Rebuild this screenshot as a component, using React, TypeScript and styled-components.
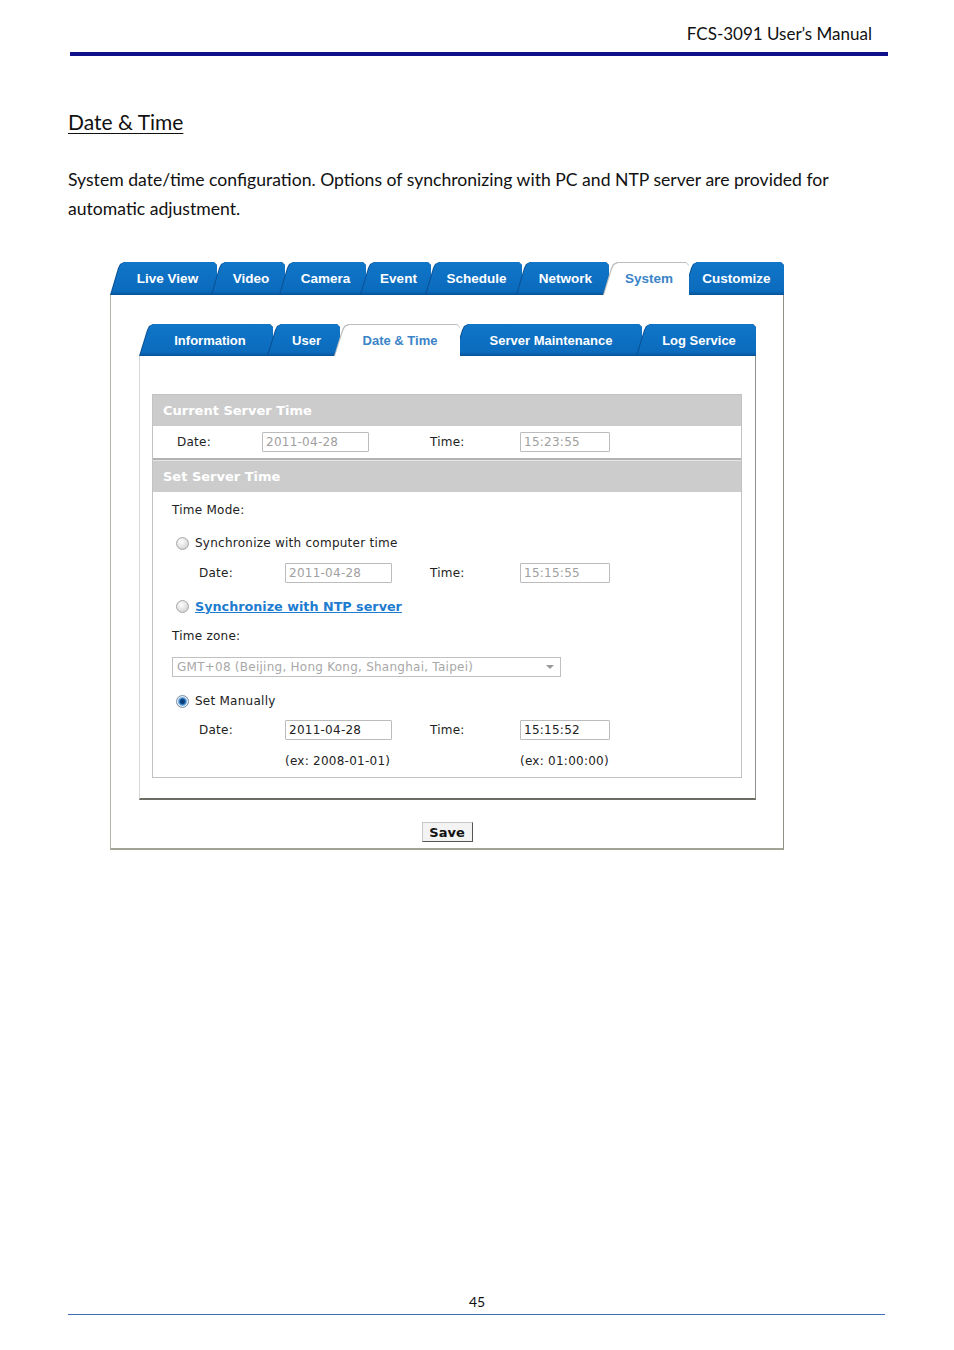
import styled, { createGlobalStyle } from "styled-components";

const GlobalStyle = createGlobalStyle`
  html, body {
    margin: 0;
    padding: 0;
    background: #fff;
  }
  body {
    font-family: Lato, "Noto Sans", sans-serif;
    color: #000;
  }
`;

const TOP_TABS = [
  { label: "Live View", width: 107 },
  { label: "Video", width: 68 },
  { label: "Camera", width: 81 },
  { label: "Event", width: 65 },
  { label: "Schedule", width: 91 },
  { label: "Network", width: 87 },
  { label: "System", width: 80, active: true },
  { label: "Customize", width: 95 },
];

const SUB_TABS = [
  { label: "Information", width: 134 },
  { label: "User", width: 67 },
  { label: "Date & Time", width: 120, active: true },
  { label: "Server Maintenance", width: 182 },
  { label: "Log Service", width: 114 },
];

const TAB_SHAPE =
  "polygon(0 100%, 8px 6px, 10px 2px, 14px 0, calc(100% - 3px) 0, 100% 3px, 100% 100%)";

export default function App() {
  return (
    <Page>
      <GlobalStyle />
      <DocHeader>FCS-3091 User’s Manual</DocHeader>
      <HeaderRule />

      <Heading>Date &amp; Time</Heading>
      <Paragraph>
        System date/time configuration. Options of synchronizing with PC and NTP server are provided for
        automatic adjustment.
      </Paragraph>

      <Shot>
        <TabBar $h={33}>
          {TOP_TABS.map((t, i) => (
            <Tab key={t.label} $w={t.width} $first={i === 0} $active={t.active} $size={13.5}>
              {t.label}
            </Tab>
          ))}
        </TabBar>
        <OuterPanel>
          <TabBar $h={32}>
            {SUB_TABS.map((t, i) => (
              <Tab key={t.label} $w={t.width} $first={i === 0} $active={t.active} $size={13}>
                {t.label}
              </Tab>
            ))}
          </TabBar>
          <InnerPanel>
            <FormBox>
              <SectionHeader>Current Server Time</SectionHeader>
              <FieldRow $label={25} $input={110} $h={32} $divider>
                <Label>Date:</Label>
                <TextBox $w={107} readOnly disabled defaultValue="2011-04-28" />
                <Label>Time:</Label>
                <TextBox $w={90} readOnly disabled defaultValue="15:23:55" />
              </FieldRow>
              <SectionHeader>Set Server Time</SectionHeader>

              <PlainRow $h={35} $pad={19}>
                <Label>Time Mode:</Label>
              </PlainRow>
              <PlainRow $h={32} $pad={23}>
                <Radio />
                <Label>Synchronize with computer time</Label>
              </PlainRow>
              <FieldRow $label={47} $input={133} $h={28}>
                <Label>Date:</Label>
                <TextBox $w={107} readOnly disabled defaultValue="2011-04-28" />
                <Label>Time:</Label>
                <TextBox $w={90} readOnly disabled defaultValue="15:15:55" />
              </FieldRow>
              <PlainRow $h={38} $pad={23}>
                <Radio />
                <NtpLink href="#">Synchronize with NTP server</NtpLink>
              </PlainRow>
              <PlainRow $h={22} $pad={19}>
                <Label>Time zone:</Label>
              </PlainRow>
              <PlainRow $h={40} $pad={19}>
                <SelectBox>
                  GMT+08 (Beijing, Hong Kong, Shanghai, Taipei)
                  <SelectArrow />
                </SelectBox>
              </PlainRow>
              <PlainRow $h={28} $pad={23}>
                <Radio $checked />
                <Label>Set Manually</Label>
              </PlainRow>
              <FieldRow $label={47} $input={133} $h={30}>
                <Label>Date:</Label>
                <TextBox $w={107} readOnly defaultValue="2011-04-28" />
                <Label>Time:</Label>
                <TextBox $w={90} readOnly defaultValue="15:15:52" />
              </FieldRow>
              <FieldRow $label={47} $input={133} $h={32}>
                <span />
                <Label>(ex: 2008-01-01)</Label>
                <span />
                <Label>(ex: 01:00:00)</Label>
              </FieldRow>
            </FormBox>
          </InnerPanel>
          <SaveArea>
            <SaveButton type="button">Save</SaveButton>
          </SaveArea>
        </OuterPanel>
      </Shot>

      <Footer>
        <PageNumber>45</PageNumber>
        <FooterRule />
      </Footer>
    </Page>
  );
}

const Page = styled.div`
  width: 954px;
  height: 1350px;
  display: flex;
  flex-direction: column;
  overflow: hidden;
`;

const DocHeader = styled.div`
  padding: 24px 82px 0 0;
  text-align: right;
  font-size: 17px;
  line-height: 20px;
  color: #111;
`;

const HeaderRule = styled.div`
  height: 4px;
  margin: 8px 66px 0 70px;
  background: #10108c;
`;

const Heading = styled.h2`
  margin: 53px 0 0 68px;
  font-size: 21px;
  font-weight: normal;
  line-height: 26px;
  text-decoration: underline;
  text-underline-offset: 3px;
  text-decoration-thickness: 1px;
  color: #111;
`;

const Paragraph = styled.p`
  margin: 30px 0 0 68px;
  width: 790px;
  font-size: 17.6px;
  line-height: 29px;
  color: #111;
`;

const Shot = styled.div`
  width: 674px;
  margin: 39px 0 0 110px;
`;

const TabBar = styled.div<{ $h: number }>`
  display: flex;
  height: ${(p) => p.$h}px;
`;

const Tab = styled.div<{ $w: number; $first?: boolean; $active?: boolean; $size: number }>`
  position: relative;
  flex: none;
  box-sizing: border-box;
  width: ${(p) => p.$w + (p.$first ? 0 : 6)}px;
  margin-left: ${(p) => (p.$first ? 0 : -6)}px;
  padding-left: ${(p) => (p.$first ? 8 : 6)}px;
  z-index: ${(p) => (p.$active ? 5 : 1)};
  display: flex;
  align-items: center;
  justify-content: center;
  font-family: "Liberation Sans", Arial, sans-serif;
  font-weight: bold;
  font-size: ${(p) => p.$size}px;
  color: ${(p) => (p.$active ? "#3a84c8" : "#fff")};
  background: ${(p) => (p.$active ? "#bdbdbd" : "#0a4f92")};
  clip-path: ${TAB_SHAPE};

  &::before {
    content: "";
    position: absolute;
    top: ${(p) => (p.$active ? 1 : 0)}px;
    left: 1px;
    right: 0;
    bottom: 0;
    z-index: -1;
    clip-path: ${TAB_SHAPE};
    background: ${(p) =>
      p.$active
        ? "#fff"
        : "linear-gradient(to bottom, #1076c8 0%, #0b6bbd 88%, #085396 100%)"};
  }
`;

const OuterPanel = styled.div`
  box-sizing: border-box;
  height: 555px;
  border: 1px solid #b4b4a8;
  border-top: none;
  border-right-color: #8f8f82;
  border-bottom: 2px solid #a3a396;
  padding: 29px 0 0 28px;
  display: flex;
  flex-direction: column;
  width: 674px;

  & > ${TabBar} {
    width: 617px;
  }
`;

const InnerPanel = styled.div`
  box-sizing: border-box;
  width: 617px;
  height: 444px;
  border: 1px solid #d6d6d6;
  border-top: none;
  border-right-color: #909090;
  border-bottom: 2px solid #6c6c64;
  padding: 38px 0 0 12px;
`;

const FormBox = styled.div`
  box-sizing: border-box;
  width: 590px;
  border: 1px solid #c2c2c2;
  font-family: "DejaVu Sans", Verdana, sans-serif;
  font-size: 12px;
  letter-spacing: 0.25px;
  color: #222;
`;

const SectionHeader = styled.div`
  height: 31px;
  display: flex;
  align-items: center;
  padding-left: 10px;
  background: #cccccc;
  color: #fff;
  font-weight: bold;
  font-size: 13px;
  letter-spacing: 0;
`;

const FieldRow = styled.div<{ $label: number; $input: number; $h: number; $divider?: boolean }>`
  display: grid;
  grid-template-columns: ${(p) => `${p.$input - p.$label}px ${278 - p.$input}px 90px 1fr`};
  align-items: center;
  height: ${(p) => p.$h}px;
  padding-left: ${(p) => p.$label - 1}px;
  ${(p) =>
    p.$divider &&
    `
    border-bottom: 2px solid #b2b2b2;
    box-shadow: 0 1px 0 #e6e6e6;
    margin-bottom: 1px;
  `}
`;

const PlainRow = styled.div<{ $h: number; $pad: number }>`
  display: flex;
  align-items: center;
  gap: 6px;
  height: ${(p) => p.$h}px;
  padding-left: ${(p) => p.$pad}px;
`;

const Label = styled.span`
  white-space: nowrap;
  color: #222;
`;

const TextBox = styled.input<{ $w: number }>`
  box-sizing: border-box;
  width: ${(p) => p.$w}px;
  height: 20px;
  padding: 0 3px;
  margin: 0;
  border: 1px solid #bcbcbc;
  border-radius: 1px;
  background: #fff;
  font-family: "DejaVu Sans", Verdana, sans-serif;
  font-size: 12px;
  letter-spacing: 0.25px;
  color: ${(p) => (p.disabled ? "#a0a0a0" : "#222")};
  outline: none;
`;

const Radio = styled.span<{ $checked?: boolean }>`
  flex: none;
  box-sizing: border-box;
  width: 13px;
  height: 13px;
  border-radius: 50%;
  border: 1px solid ${(p) => (p.$checked ? "#7d8fa3" : "#a8a8a8")};
  background: ${(p) =>
    p.$checked
      ? "radial-gradient(circle at 50% 50%, #0d3f7a 0 2px, #2b78c4 3px, #7fb3e4 4px, #e6eef6 5px, #cfd6dd 6px)"
      : "radial-gradient(circle at 40% 35%, #ffffff 0, #e6e6e6 45%, #c4c4c4 100%)"};
`;

const NtpLink = styled.a`
  font-weight: bold;
  font-size: 12.75px;
  letter-spacing: 0;
  color: #1d7ccf;
  text-decoration: underline;
`;

const SelectBox = styled.div`
  position: relative;
  box-sizing: border-box;
  width: 389px;
  height: 20px;
  display: flex;
  align-items: center;
  padding-left: 4px;
  border: 1px solid #c0c0c0;
  color: #a8a8a8;
  background: #fff;
`;

const SelectArrow = styled.span`
  position: absolute;
  right: 6px;
  top: 7px;
  width: 0;
  height: 0;
  border-left: 4px solid transparent;
  border-right: 4px solid transparent;
  border-top: 4px solid #9a9a9a;
`;

const SaveArea = styled.div`
  display: flex;
  justify-content: center;
  padding: 22px 28px 0 0;
`;

const SaveButton = styled.button`
  box-sizing: border-box;
  width: 51px;
  height: 20px;
  padding: 0;
  border: 1px solid;
  border-color: #c8c8c8 #555 #555 #c8c8c8;
  background: #f3f3f3;
  font-family: "DejaVu Sans", Verdana, sans-serif;
  font-weight: bold;
  font-size: 13px;
  color: #111;
`;

const Footer = styled.div`
  margin-top: auto;
  padding-bottom: 35px;
  display: flex;
  flex-direction: column;
  align-items: center;
`;

const PageNumber = styled.div`
  font-size: 14px;
  line-height: 16px;
  margin: 0 0 4px 0;
  color: #111;
`;

const FooterRule = styled.div`
  align-self: flex-start;
  margin-left: 68px;
  width: 817px;
  height: 1px;
  background: #3f6fb3;
`;
